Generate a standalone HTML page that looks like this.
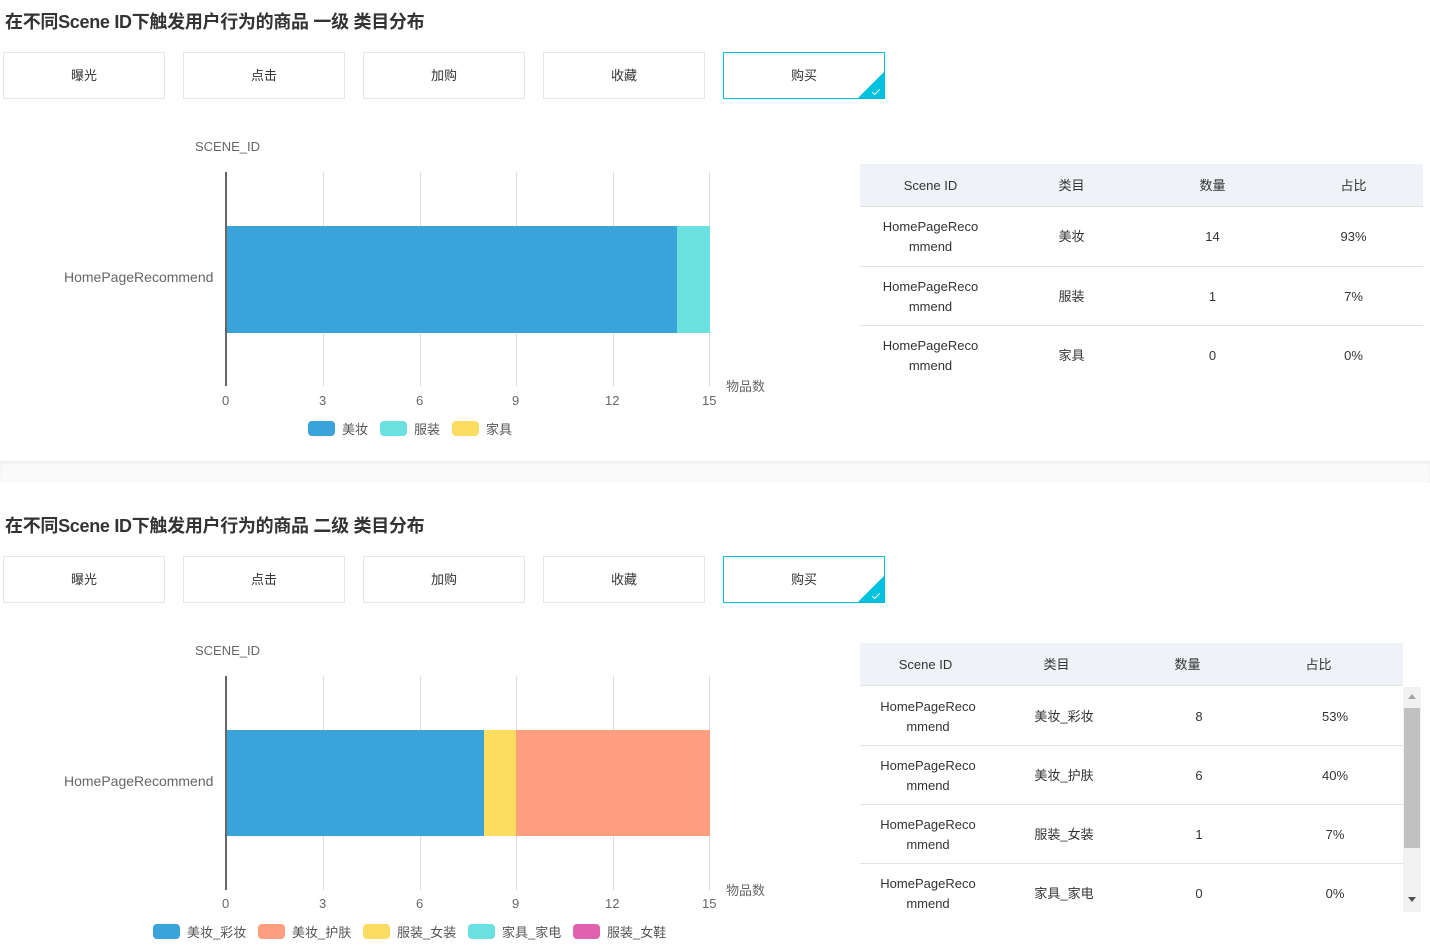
<!DOCTYPE html>
<html><head><meta charset="utf-8"><style>
*{margin:0;padding:0;box-sizing:border-box}
body{width:1430px;height:945px;position:relative;background:#fff;font-family:"Liberation Sans","Noto Sans CJK SC",sans-serif;color:#333;overflow:hidden}
.a{position:absolute}
h2{position:absolute;left:5px;font-size:18px;font-weight:bold;color:#333;letter-spacing:-0.3px}
.btn{position:absolute;width:162px;height:47px;border:1px solid #e6e6e6;font-size:13px;text-align:center;line-height:45px;color:#333;background:#fff}
.btn.on{border-color:#00c1de}
.btn.on:after{content:"";position:absolute;right:-1px;bottom:-1px;border-style:solid;border-width:0 0 28px 28px;border-color:transparent transparent #00c1de transparent}
.btn.on i{position:absolute;right:4px;bottom:5px;width:8px;height:4px;border-left:1.5px solid #fff;border-bottom:1.5px solid #fff;transform:rotate(-45deg);z-index:2}
.lbl{position:absolute;font-size:13px;color:#666}
.grid{position:absolute;width:1px;background:#ddd}
.t{position:absolute;font-size:13px;color:#333;text-align:center}
.hd{position:absolute;background:#eff2f6;border-bottom:1px solid #e2e2e2}
.row{position:absolute;border-bottom:1px solid #e2e2e2}
.c{position:absolute;text-align:center;font-size:13px;line-height:20px;color:#333;transform:translateY(-50%)}
.sw{position:absolute;width:27px;height:15px;border-radius:4px}
.lg{position:absolute;font-size:13px;color:#555}
</style></head><body>

<h2 style="top:8px">在不同Scene ID下触发用户行为的商品 一级 类目分布</h2>
<div class="btn" style="left:3px;top:52px">曝光</div>
<div class="btn" style="left:183px;top:52px">点击</div>
<div class="btn" style="left:363px;top:52px">加购</div>
<div class="btn" style="left:543px;top:52px">收藏</div>
<div class="btn on" style="left:723px;top:52px">购买<i></i></div>

<div class="lbl" style="left:195px;top:139px">SCENE_ID</div>
<div class="grid" style="left:323px;top:172px;height:214px"></div>
<div class="grid" style="left:420px;top:172px;height:214px"></div>
<div class="grid" style="left:516px;top:172px;height:214px"></div>
<div class="grid" style="left:613px;top:172px;height:214px"></div>
<div class="grid" style="left:709px;top:172px;height:214px"></div>
<div class="a" style="left:226px;top:226px;width:451px;height:107px;background:#3aa3da"></div>
<div class="a" style="left:677px;top:226px;width:33px;height:107px;background:#6be0e0"></div>
<div class="a" style="left:225px;top:172px;width:2px;height:214px;background:#666"></div>
<div class="lbl" style="left:64px;top:269px;font-size:14px">HomePageRecommend</div>
<div class="lbl" style="left:726px;top:376px">物品数</div>
<div class="lbl" style="left:222px;top:393px">0</div>
<div class="lbl" style="left:319px;top:393px">3</div>
<div class="lbl" style="left:416px;top:393px">6</div>
<div class="lbl" style="left:512px;top:393px">9</div>
<div class="lbl" style="left:605px;top:393px">12</div>
<div class="lbl" style="left:702px;top:393px">15</div>
<div class="sw" style="left:308px;top:421px;background:#3aa3da"></div><div class="lg" style="left:342px;top:419px">美妆</div>
<div class="sw" style="left:380px;top:421px;background:#6be0e0"></div><div class="lg" style="left:414px;top:419px">服装</div>
<div class="sw" style="left:452px;top:421px;background:#fddd60"></div><div class="lg" style="left:486px;top:419px">家具</div>

<div class="hd" style="left:860px;top:164px;width:563px;height:43px"></div>
<div class="c" style="left:860px;width:141px;top:186px">Scene ID</div>
<div class="c" style="left:1001px;width:141px;top:186px">类目</div>
<div class="c" style="left:1142px;width:141px;top:186px">数量</div>
<div class="c" style="left:1283px;width:141px;top:186px">占比</div>
<div class="row" style="left:860px;top:207px;width:563px;height:60px"></div>
<div class="row" style="left:860px;top:267px;width:563px;height:59px"></div>
<div class="c" style="left:860px;width:141px;top:237px">HomePageReco<br>mmend</div><div class="c" style="left:1001px;width:141px;top:237px">美妆</div><div class="c" style="left:1142px;width:141px;top:237px">14</div><div class="c" style="left:1283px;width:141px;top:237px">93%</div>
<div class="c" style="left:860px;width:141px;top:297px">HomePageReco<br>mmend</div><div class="c" style="left:1001px;width:141px;top:297px">服装</div><div class="c" style="left:1142px;width:141px;top:297px">1</div><div class="c" style="left:1283px;width:141px;top:297px">7%</div>
<div class="c" style="left:860px;width:141px;top:356px">HomePageReco<br>mmend</div><div class="c" style="left:1001px;width:141px;top:356px">家具</div><div class="c" style="left:1142px;width:141px;top:356px">0</div><div class="c" style="left:1283px;width:141px;top:356px">0%</div>

<div class="a" style="left:0;top:461px;width:1430px;height:22px;background:#fafafa;box-shadow:inset 0 2px 3px rgba(0,0,0,0.06)"></div>

<h2 style="top:512px">在不同Scene ID下触发用户行为的商品 二级 类目分布</h2>
<div class="btn" style="left:3px;top:556px">曝光</div>
<div class="btn" style="left:183px;top:556px">点击</div>
<div class="btn" style="left:363px;top:556px">加购</div>
<div class="btn" style="left:543px;top:556px">收藏</div>
<div class="btn on" style="left:723px;top:556px">购买<i></i></div>

<div class="lbl" style="left:195px;top:643px">SCENE_ID</div>
<div class="grid" style="left:323px;top:676px;height:214px"></div>
<div class="grid" style="left:420px;top:676px;height:214px"></div>
<div class="grid" style="left:516px;top:676px;height:214px"></div>
<div class="grid" style="left:613px;top:676px;height:214px"></div>
<div class="grid" style="left:709px;top:676px;height:214px"></div>
<div class="a" style="left:226px;top:730px;width:258px;height:106px;background:#3aa3da"></div>
<div class="a" style="left:484px;top:730px;width:32px;height:106px;background:#fddd60"></div>
<div class="a" style="left:516px;top:730px;width:194px;height:106px;background:#ff9f7f"></div>
<div class="a" style="left:225px;top:676px;width:2px;height:214px;background:#666"></div>
<div class="lbl" style="left:64px;top:773px;font-size:14px">HomePageRecommend</div>
<div class="lbl" style="left:726px;top:880px">物品数</div>
<div class="lbl" style="left:222px;top:896px">0</div>
<div class="lbl" style="left:319px;top:896px">3</div>
<div class="lbl" style="left:416px;top:896px">6</div>
<div class="lbl" style="left:512px;top:896px">9</div>
<div class="lbl" style="left:605px;top:896px">12</div>
<div class="lbl" style="left:702px;top:896px">15</div>
<div class="sw" style="left:153px;top:924px;background:#3aa3da"></div><div class="lg" style="left:187px;top:922px">美妆_彩妆</div>
<div class="sw" style="left:258px;top:924px;background:#ff9f7f"></div><div class="lg" style="left:292px;top:922px">美妆_护肤</div>
<div class="sw" style="left:363px;top:924px;background:#fddd60"></div><div class="lg" style="left:397px;top:922px">服装_女装</div>
<div class="sw" style="left:468px;top:924px;background:#6be0e0"></div><div class="lg" style="left:502px;top:922px">家具_家电</div>
<div class="sw" style="left:573px;top:924px;background:#e062ae"></div><div class="lg" style="left:607px;top:922px">服装_女鞋</div>

<div class="hd" style="left:860px;top:643px;width:543px;height:43px"></div>
<div class="c" style="left:860px;width:131px;top:665px">Scene ID</div>
<div class="c" style="left:991px;width:131px;top:665px">类目</div>
<div class="c" style="left:1122px;width:131px;top:665px">数量</div>
<div class="c" style="left:1253px;width:131px;top:665px">占比</div>
<div class="row" style="left:860px;top:686px;width:543px;height:60px"></div>
<div class="row" style="left:860px;top:746px;width:543px;height:59px"></div>
<div class="row" style="left:860px;top:805px;width:543px;height:59px"></div>
<div class="c" style="left:860px;width:136px;top:717px">HomePageReco<br>mmend</div><div class="c" style="left:996px;width:136px;top:717px">美妆_彩妆</div><div class="c" style="left:1131px;width:136px;top:717px">8</div><div class="c" style="left:1267px;width:136px;top:717px">53%</div>
<div class="c" style="left:860px;width:136px;top:776px">HomePageReco<br>mmend</div><div class="c" style="left:996px;width:136px;top:776px">美妆_护肤</div><div class="c" style="left:1131px;width:136px;top:776px">6</div><div class="c" style="left:1267px;width:136px;top:776px">40%</div>
<div class="c" style="left:860px;width:136px;top:835px">HomePageReco<br>mmend</div><div class="c" style="left:996px;width:136px;top:835px">服装_女装</div><div class="c" style="left:1131px;width:136px;top:835px">1</div><div class="c" style="left:1267px;width:136px;top:835px">7%</div>
<div class="c" style="left:860px;width:136px;top:894px">HomePageReco<br>mmend</div><div class="c" style="left:996px;width:136px;top:894px">家具_家电</div><div class="c" style="left:1131px;width:136px;top:894px">0</div><div class="c" style="left:1267px;width:136px;top:894px">0%</div>

<div class="a" style="left:1403px;top:687px;width:18px;height:225px;background:#f1f1f1"></div>
<div class="a" style="left:1404px;top:708px;width:16px;height:140px;background:#c1c1c1"></div>
<div class="a" style="left:1408px;top:694px;border-style:solid;border-width:0 4.5px 5px 4.5px;border-color:transparent transparent #a3a3a3 transparent"></div>
<div class="a" style="left:1408px;top:897px;border-style:solid;border-width:5px 4.5px 0 4.5px;border-color:#505050 transparent transparent transparent"></div>
</body></html>
